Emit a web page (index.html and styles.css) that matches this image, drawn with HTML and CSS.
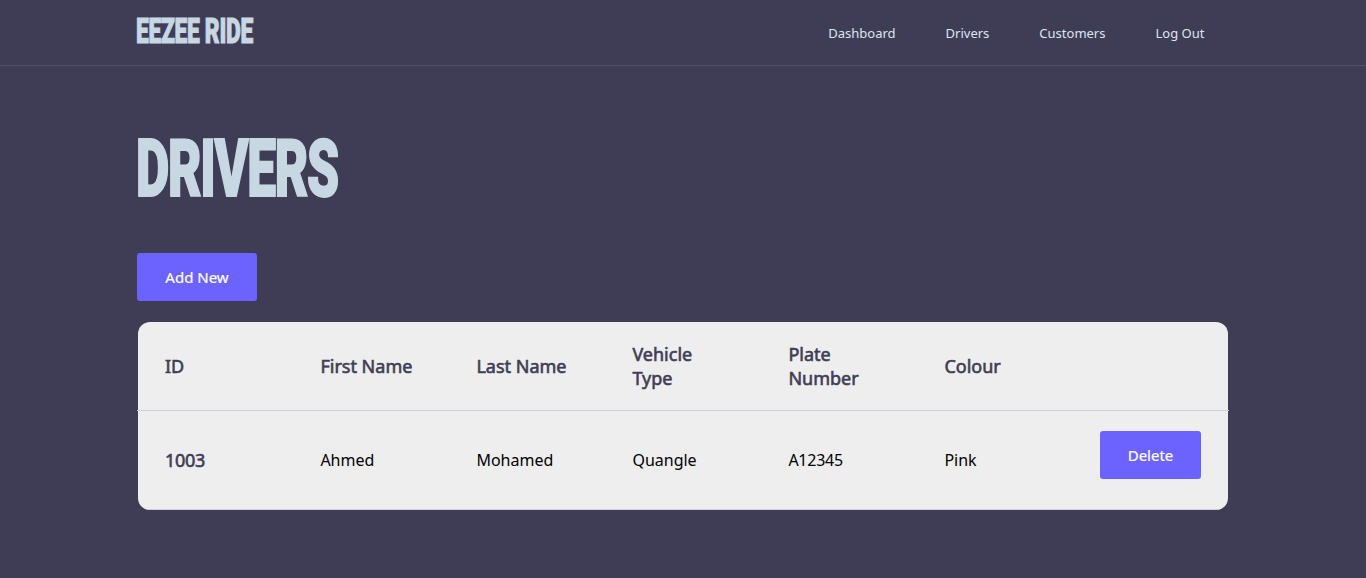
FILE: index.html
```html
<!DOCTYPE html>
<html lang="en">
<head>
<meta charset="utf-8">
<title>Eezee Ride</title>
<link rel="stylesheet" href="styles.css">
</head>
<body>
<header class="header">
  <div class="container nav-bar">
    <a class="logo"><span class="logo-text">EEZEE RIDE</span></a>
    <nav class="nav">
      <a>Dashboard</a><a>Drivers</a><a>Customers</a><a>Log Out</a>
    </nav>
  </div>
</header>
<main class="container">
  <h1 class="title"><span class="title-text">DRIVERS</span></h1>
  <button class="btn btn-add">Add New</button>
  <div class="table-wrap">
  <table class="table">
    <thead>
      <tr><th>ID</th><th>First Name</th><th>Last Name</th><th>Vehicle Type</th><th>Plate Number</th><th>Colour</th><th></th></tr>
    </thead>
    <tbody>
      <tr><th>1003</th><td>Ahmed</td><td>Mohamed</td><td>Quangle</td><td class="plate">A12345</td><td>Pink</td><td class="action"><button class="btn btn-delete">Delete</button></td></tr>
    </tbody>
  </table>
  </div>
</main>
</body>
</html>
```
FILE: styles.css
```css
* { box-sizing: border-box; }
body {
  margin: 0;
  min-height: 578px;
  background: #3f3d56;
  font-family: "Noto Sans", sans-serif;
}
.container { width: 1092px; margin: 0 auto; }
.header { height: 66px; border-bottom: 1px solid #524f69; }
.nav-bar { display: flex; justify-content: space-between; height: 65px; }
.logo { width: 118px; padding-top: 18px; }
.logo-text, .title-text {
  display: inline-block;
  font-family: Roboto, sans-serif;
  font-weight: 900;
  color: #c8d8e3;
  white-space: nowrap;
  transform-origin: 0 50%;
}
.logo-text {
  font-size: 35px;
  line-height: 28px;
  letter-spacing: -.5px;
  -webkit-text-stroke: 1px #c8d8e3;
  transform: translateX(-1px) scaleX(.653);
}
.nav { display: flex; gap: 50px; padding: 24px 24.6px 0 0; font-size: 13px; line-height: 18px; color: #dce6ee; }
.title { height: 187px; margin: 0; padding-top: 57px; font-size: 80px; line-height: 84px; }
.title-text {
  letter-spacing: -2px;
  -webkit-text-stroke: 2px #c8d8e3;
  transform: translateX(-1px) scaleX(.643);
}
.btn {
  display: block;
  height: 48px;
  padding: 0;
  border: 0;
  border-radius: 3px;
  background: #6c63ff;
  color: #fff;
  font: 400 15px/48px "Noto Sans", sans-serif;
  -webkit-text-stroke: .2px #fff;
  white-space: nowrap;
}
.btn-add { width: 120px; }
.btn-delete { width: 101px; }
/* The divider under the header row extends one pixel past the card on each side */
.table-wrap {
  margin-top: 21px;
  padding: 0 1px;
  background: linear-gradient(#cfd0d7, #cfd0d7) 0 88px / 100% 1px no-repeat;
}
.table {
  width: 1090px;
  border-spacing: 0;
  table-layout: fixed;
  background: #eee;
  border-radius: 12px;
  overflow: hidden;
}
th, td { padding: 0 27px 0 26.4px; border-bottom: 1px solid #cfd0d7; text-align: left; vertical-align: middle; }
th:not(:last-child), td:not(:last-child) { width: 156px; }
th { font-size: 18px; line-height: 24px; font-weight: 400; color: #3f3d56; -webkit-text-stroke: .6px #3f3d56; }
td { font-size: 16px; line-height: 24px; color: #000; }
thead th { height: 89px; }
tbody th { height: 99px; letter-spacing: -.3px; }
tbody td { height: 99px; }
th:first-child { padding-left: 27px; }
td.plate { letter-spacing: -.25px; }
td.action { padding: 20px 0 0 26px; vertical-align: top; }
```
